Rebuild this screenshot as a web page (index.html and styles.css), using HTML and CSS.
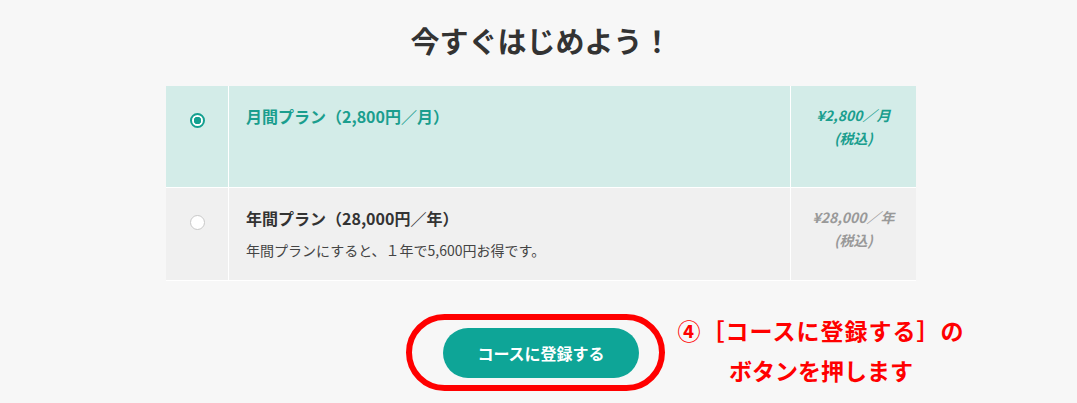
FILE: index.html
```html
<!DOCTYPE html>
<html lang="ja">
<head>
    <meta charset="UTF-8">
    <meta name="viewport" content="width=device-width, initial-scale=1.0">
    <title>今すぐはじめよう！</title>
    <link rel="stylesheet" href="styles.css">
</head>
<body>

    <div class="signup">
        <h2 class="signup-title">今すぐはじめよう！</h2>

        <!-- Plan list -->
        <div class="plans">
            <div class="plan plan-selected">
                <div class="plan-radio"><span class="radio radio-on"></span></div>
                <div class="plan-body">
                    <p class="plan-name">月間プラン（2,800円／月）</p>
                </div>
                <div class="plan-price">
                    <p>¥2,800／月</p>
                    <p>(税込)</p>
                </div>
            </div>
            <div class="plan">
                <div class="plan-radio"><span class="radio"></span></div>
                <div class="plan-body">
                    <p class="plan-name">年間プラン（28,000円／年）</p>
                    <p class="plan-note">年間プランにすると、１年で5,600円お得です。</p>
                </div>
                <div class="plan-price">
                    <p>¥28,000／年</p>
                    <p>(税込)</p>
                </div>
            </div>
        </div>

        <div class="actions">
            <button class="register-btn">コースに登録する</button>
            <!-- Annotation overlay -->
            <span class="mark-ring"></span>
            <p class="mark-note"><span class="mark-line">④［コースに登録する］の</span><br>ボタンを押します</p>
        </div>
    </div>

</body>
</html>
```

FILE: styles.css
```css
body {
    font-family: "Noto Sans CJK JP", sans-serif;
    margin: 0;
    padding: 0 0 0 5px;
    min-height: 100vh;
    background-color: #f7f7f7;
    color: #333;
}

p {
    margin: 0;
}

.signup {
    width: 750px;
    margin: 0 auto;
}

.signup-title {
    margin: 0;
    padding-top: 20px;
    height: 86px;
    box-sizing: border-box;
    text-align: center;
    font-size: 29px;
    line-height: 40px;
    font-weight: bold;
    color: #333;
}

.plans {
    display: flex;
    flex-direction: column;
    gap: 1px;
    background-color: #fff;
    padding-bottom: 1px;
}

.plan {
    display: grid;
    grid-template-columns: 62px 1fr 125px;
    column-gap: 1px;
    height: 92px;
    background-color: #fff;
}

.plan > div {
    background-color: #f0f0f0;
}

.plan-selected {
    height: 101px;
}

.plan-selected > div {
    background-color: #d3ece8;
}

.plan-radio {
    display: flex;
    justify-content: center;
    padding-top: 27px;
    box-sizing: border-box;
}

.radio {
    width: 15px;
    height: 15px;
    border-radius: 50%;
    border: 1px solid #c8c8c8;
    background-color: #fff;
    box-sizing: border-box;
}

.radio-on {
    border: 2px solid #14a090;
    background: radial-gradient(circle, #14a090 0 3.5px, #fff 4px);
}

.plan-body {
    padding: 20px 0 0 17px;
}

.plan-name {
    font-size: 16px;
    line-height: 20px;
    font-weight: bold;
    color: #333;
    margin-bottom: 10px;
}

.plan-selected .plan-name {
    color: #1a9e8e;
}

.plan-note {
    font-size: 14px;
    line-height: 24px;
    color: #444;
}

.plan-price {
    padding-top: 18px;
    text-align: center;
    font-size: 14px;
    line-height: 23px;
    font-weight: bold;
    font-style: italic;
    color: #999;
}

.plan-selected .plan-price {
    color: #1a9e8e;
}

.actions {
    position: relative;
    display: flex;
    justify-content: center;
    padding: 47px 0 30px;
}

.register-btn {
    width: 196px;
    height: 50px;
    border: none;
    border-radius: 25px;
    background-color: #0ea597;
    color: #fff;
    font-family: inherit;
    font-size: 16px;
    font-weight: bold;
    cursor: pointer;
}

.mark-ring {
    position: absolute;
    left: 240px;
    top: 33px;
    width: 259px;
    height: 77px;
    border: 6px solid #ff0000;
    border-radius: 40px;
    box-sizing: border-box;
}

.mark-note {
    position: absolute;
    left: 505px;
    top: 29px;
    width: 300px;
    text-align: center;
    font-size: 23px;
    line-height: 40px;
    font-weight: bold;
    color: #ff0000;
}

.mark-line {
    letter-spacing: 1px;
}
```
